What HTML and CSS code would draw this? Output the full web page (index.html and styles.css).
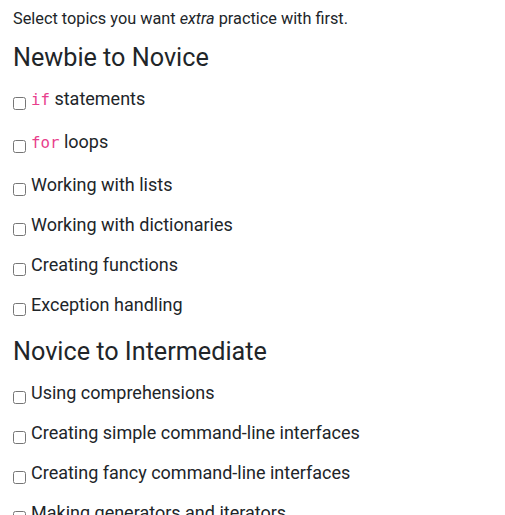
FILE: index.html
```html
<!DOCTYPE html>
<html>
<head>
<meta charset="utf-8">
<link rel="stylesheet" href="styles.css">
</head>
<body>
<div class="page">
  <p class="intro">Select topics you want <em>extra</em> practice with first.</p>
  <h4 class="level">Newbie to Novice</h4>
  <div class="topics">
    <label class="topic with-code"><input type="checkbox"><span><code>if</code> statements</span></label>
    <label class="topic with-code"><input type="checkbox"><span><code>for</code> loops</span></label>
    <label class="topic"><input type="checkbox"><span>Working with lists</span></label>
    <label class="topic"><input type="checkbox"><span>Working with dictionaries</span></label>
    <label class="topic"><input type="checkbox"><span>Creating functions</span></label>
    <label class="topic"><input type="checkbox"><span>Exception handling</span></label>
  </div>
  <h4 class="level">Novice to Intermediate</h4>
  <div class="topics">
    <label class="topic"><input type="checkbox"><span>Using comprehensions</span></label>
    <label class="topic"><input type="checkbox"><span>Creating simple command-line interfaces</span></label>
    <label class="topic"><input type="checkbox"><span>Creating fancy command-line interfaces</span></label>
    <label class="topic"><input type="checkbox"><span>Making generators and iterators</span></label>
  </div>
</div>
</body>
</html>
```
FILE: styles.css
```css
html, body {
  margin: 0;
  padding: 0;
  background: #fff;
}
body {
  font-family: Roboto, "Liberation Sans", sans-serif;
  color: #212529;
  font-size: 16px;
  line-height: 1.5;
}
.page {
  padding: 7px 13px 0 13px;
}
.intro {
  font-size: 16.3px;
  line-height: 24px;
  margin: 0 0 12px 0;
}
.level {
  font-size: 25.2px;
  font-weight: 400;
  line-height: 30px;
  margin: 0 0 12px 0;
}
.topics {
  display: flex;
  flex-direction: column;
  gap: 13px;
  margin-bottom: 19px;
}
.topic {
  display: block;
  font-size: 18px;
  line-height: 27px;
}
.topic.with-code {
  padding-bottom: 2px;
}
.topic input {
  width: 13px;
  height: 13px;
  margin: 0 5px 0 0;
  vertical-align: -5px;
}
code {
  font-family: "DejaVu Sans Mono", "Liberation Mono", monospace;
  font-size: 87.5%;
  color: #e83e8c;
}
```
